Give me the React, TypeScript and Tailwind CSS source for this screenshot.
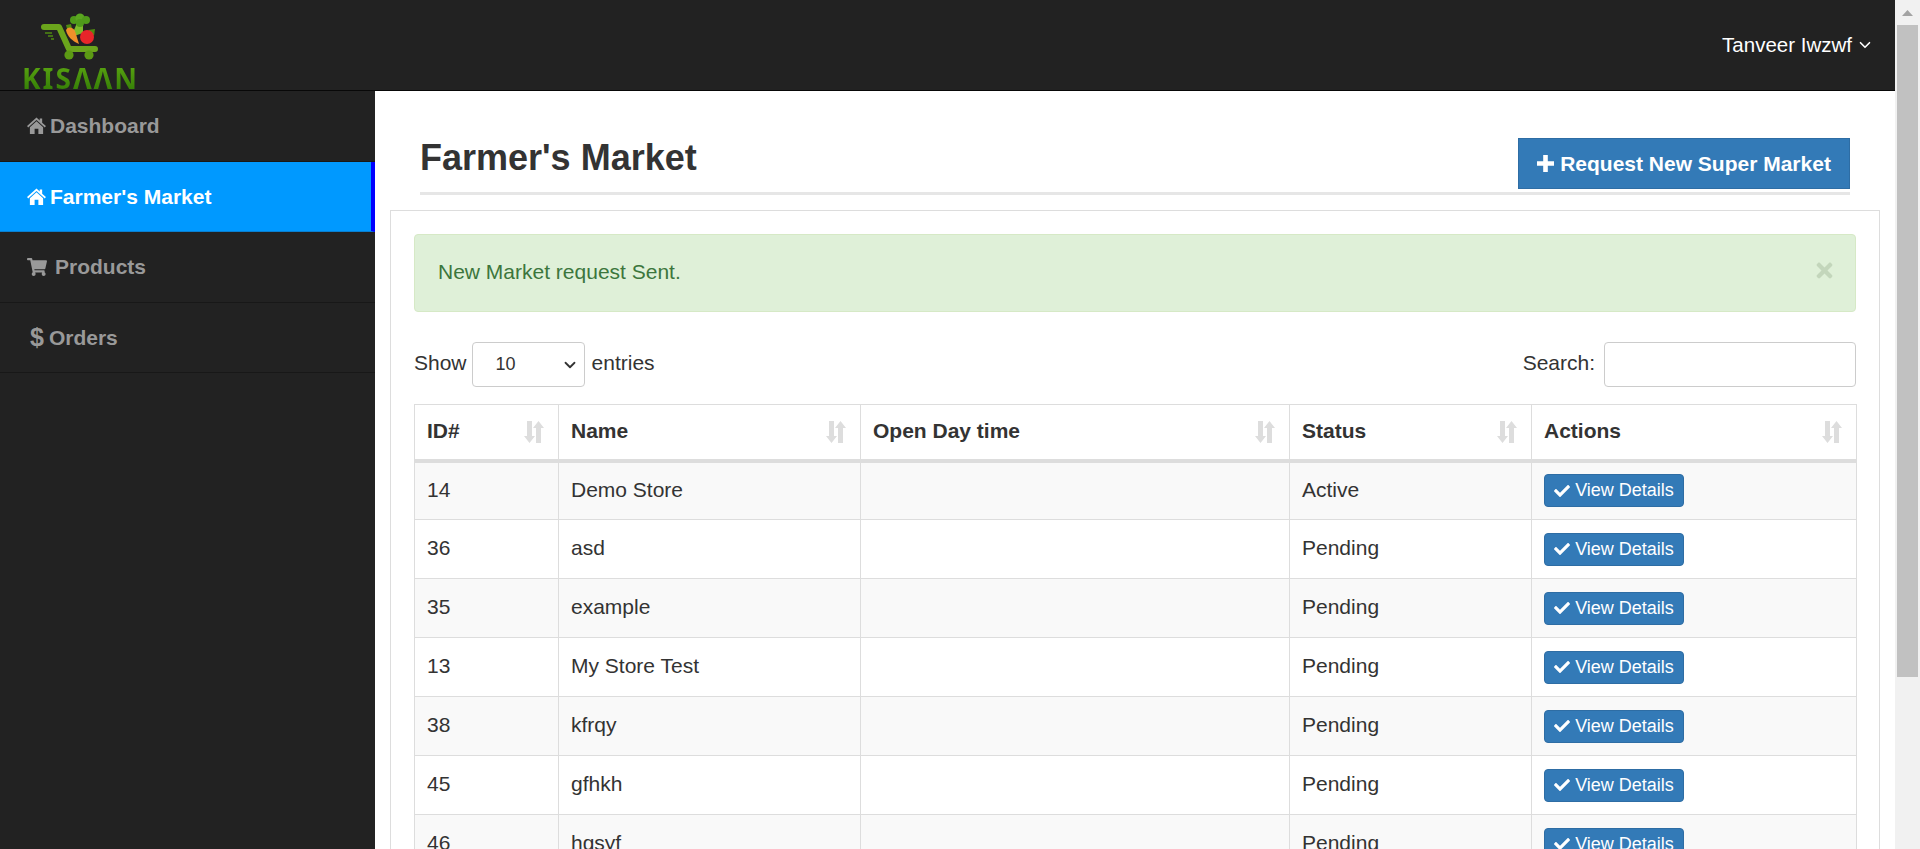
import { ChevronDown } from "lucide-react";
import { FaCheck, FaShoppingCart, FaTimes } from "react-icons/fa";

const rows = [
  { id: 14, name: "Demo Store", status: "Active" },
  { id: 36, name: "asd", status: "Pending" },
  { id: 35, name: "example", status: "Pending" },
  { id: 13, name: "My Store Test", status: "Pending" },
  { id: 38, name: "kfrqy", status: "Pending" },
  { id: 45, name: "gfhkh", status: "Pending" },
  { id: 46, name: "hgsyf", status: "Pending" },
];

const columns = [
  { label: "ID#", width: "w-[144px]" },
  { label: "Name", width: "w-[302px]" },
  { label: "Open Day time", width: "w-[429px]" },
  { label: "Status", width: "w-[242px]" },
  { label: "Actions", width: "w-[325px]" },
];

function HomeIcon() {
  return (
    <svg viewBox="0 0 20 18" className="h-[17px] w-[19px] fill-current">
      <path d="M10 0.5 L13.4 3.6 V1.6 H16 V6 L20 9.6 L18.8 11 L10 3.2 L1.2 11 L0 9.6 Z" />
      <path d="M10 4.6 L17 10.8 V18 H12 V12.5 H8 V18 H3 V10.8 Z" />
    </svg>
  );
}

function PlusIcon() {
  return (
    <svg viewBox="0 0 17 17" className="mr-[6px] h-[17px] w-[17px] fill-current">
      <path d="M6.2 0 H10.8 V6.2 H17 V10.8 H10.8 V17 H6.2 V10.8 H0 V6.2 H6.2 Z" />
    </svg>
  );
}

function SortIcon() {
  return (
    <svg viewBox="0 0 20 22" className="h-[22px] w-[20px] fill-[#dddddd]">
      <path d="M3 0 H8 V15 H11 L5.5 22 L0 15 H3 Z" />
      <path d="M12 7 H17 V22 H12 Z M14.5 0 L20 7 H9 Z" />
    </svg>
  );
}

function Logo() {
  return (
    <div className="relative h-[90px] w-[160px]">
      <svg viewBox="0 0 160 66" className="absolute left-0 top-0 h-[66px] w-[160px]">
        <path d="M44 27 H59 L69 49 H95" fill="none" stroke="#6ba51c" strokeWidth="6" strokeLinecap="round" strokeLinejoin="round" />
        <path d="M45 33 H52 M48 36 H53 M51 39 H54" stroke="#4f8a10" strokeWidth="1.3" />
        <circle cx="69" cy="55" r="4.6" fill="#5c9a14" />
        <circle cx="89" cy="55" r="4.6" fill="#5c9a14" />
        <path d="M71 37 L77 23 H83 L83 33 Z" fill="#7dbb2c" />
        <circle cx="74" cy="20" r="4" fill="#4f9a1a" />
        <circle cx="80" cy="18" r="4.6" fill="#5aa620" />
        <circle cx="86" cy="20" r="4" fill="#4f9a1a" />
        <circle cx="80" cy="23" r="4" fill="#4f9a1a" />
        <path d="M66 25 L71 24 L72 29 L67 29 Z" fill="#4f8a10" />
        <path d="M66 30 C68 26 73 27 75 31 L79 44 C72 41 67 36 66 30 Z" fill="#f0902a" />
        <path d="M88 30 L95 29 L94 36 Z" fill="#4f8a10" />
        <circle cx="87" cy="37" r="7" fill="#e8262a" />
      </svg>
      <span className="absolute left-[22px] top-[62px] bg-gradient-to-b from-[#5ea812] to-[#2f7a06] bg-clip-text font-['Noto_Sans',sans-serif] text-[28px] font-bold leading-[32px] tracking-[2px] text-transparent">
        KISΛΛN
      </span>
    </div>
  );
}

function NavItem({ icon, label, active, gap }: { icon: React.ReactNode; label: string; active?: boolean; gap: string }) {
  return (
    <a
      className={
        active
          ? "flex h-[70.5px] items-center border-b border-r-4 border-b-[#0a7fd0] border-r-[#0000ff] bg-[#0099ff] pl-[27px] text-[21px] font-bold text-white"
          : "flex h-[70.5px] items-center border-b border-b-[#181818] pl-[27px] text-[21px] font-bold text-[#999999]"
      }
    >
      <span className={`flex ${gap}`}>{icon}</span>
      {label}
    </a>
  );
}

function Scrollbar() {
  return (
    <div className="flex w-[25px] flex-col items-center bg-[#f1f1f1]">
      <svg viewBox="0 0 11 6" className="mt-[10px] h-[6px] w-[11px] fill-[#a3a3a3]">
        <path d="M5.5 0 L11 6 H0 Z" />
      </svg>
      <div className="mt-[9px] h-[652px] w-[21px] bg-[#c1c1c1]" />
    </div>
  );
}

export default function App() {
  return (
    <div className="flex h-[849px] overflow-hidden bg-white font-['Liberation_Sans',Arial,sans-serif] text-[#333333]">
      <div className="flex min-w-0 flex-1 flex-col">
        <header className="flex h-[91px] shrink-0 items-center justify-between border-b border-b-[#080808] bg-[#222222]">
          <Logo />
          <div className="mr-[21px] flex items-center gap-[4px] text-[20.5px] text-white">
            Tanveer Iwzwf
            <ChevronDown size={18} strokeWidth={2.2} />
          </div>
        </header>
        <div className="flex min-h-0 flex-1">
          <aside className="w-[375px] shrink-0 bg-[#222222]">
            <NavItem icon={<HomeIcon />} label="Dashboard" gap="mr-[4px]" />
            <NavItem icon={<HomeIcon />} label="Farmer's Market" gap="mr-[4px]" active />
            <NavItem icon={<FaShoppingCart size={20} />} label="Products" gap="mr-[8px]" />
            <NavItem icon={<span className="text-[25px] font-bold leading-none">$</span>} label="Orders" gap="ml-[3px] mr-[5px]" />
          </aside>
          <main className="min-w-0 flex-1 overflow-hidden">
            <div className="mx-[45px] mt-[47px] flex items-start justify-between border-b-[3px] border-b-[#e6e6e6] pb-[3px]">
              <h1 className="mt-[-5px] text-[36px] font-bold leading-[50px] text-[#333333]">Farmer's Market</h1>
              <button className="flex h-[51px] w-[332px] items-center justify-center border border-[#2e6da4] bg-[#337ab7] text-[21px] font-bold text-white">
                <PlusIcon />
                Request New Super Market
              </button>
            </div>
            <section className="mx-[15px] mt-[15px] border border-[#dddddd] px-[23px] pt-[23px]">
              <div className="flex h-[78px] items-center justify-between rounded-[4px] border border-[#d6e9c6] bg-[#dff0d8] pl-[23px] pr-[19px] text-[21px] text-[#3c763d]">
                <span className="mb-[2px]">New Market request Sent.</span>
                <FaTimes size={23} className="mb-[6px] text-[#c3d6bb]" />
              </div>
              <div className="mt-[30px] flex h-[45px] items-center justify-between text-[21px]">
                <label className="flex items-center">
                  <span className="mb-[4px]">Show</span>
                  <span className="relative ml-[5px] mr-[7px] flex">
                    <select className="h-[45px] w-[113px] appearance-none rounded-[4px] border border-[#cccccc] bg-white pl-[23px] text-[18px]">
                      <option>10</option>
                    </select>
                    <ChevronDown size={18} strokeWidth={2.4} className="absolute right-[6px] top-[14px]" />
                  </span>
                  <span className="mb-[4px]">entries</span>
                </label>
                <label className="flex items-center">
                  <span className="mb-[4px]">Search:</span>
                  <input className="ml-[9px] h-[45px] w-[252px] rounded-[4px] border border-[#cccccc] bg-white" />
                </label>
              </div>
              <table className="mt-[17px] w-[1442px] table-fixed border-collapse text-[21px]">
                <thead>
                  <tr className="h-[56px]">
                    {columns.map((c) => (
                      <th key={c.label} className={`${c.width} border border-b-[4px] border-[#dddddd] pl-[12px] pr-[14px] text-left font-bold`}>
                        <div className="flex items-center justify-between">
                          <span className="mb-[2px]">{c.label}</span>
                          <SortIcon />
                        </div>
                      </th>
                    ))}
                  </tr>
                </thead>
                <tbody>
                  {rows.map((r, i) => (
                    <tr key={r.id} className={i % 2 === 0 ? "h-[59px] bg-[#f9f9f9]" : "h-[59px] bg-white"}>
                      <td className="border border-[#dddddd] px-[12px] pb-[3px]">{r.id}</td>
                      <td className="border border-[#dddddd] px-[12px] pb-[3px]">{r.name}</td>
                      <td className="border border-[#dddddd] px-[12px] pb-[3px]"></td>
                      <td className="border border-[#dddddd] px-[12px] pb-[3px]">{r.status}</td>
                      <td className="border border-[#dddddd] px-[12px]">
                        <button className="flex h-[33px] w-[140px] items-center justify-center rounded-[4px] border border-[#2e6da4] bg-[#337ab7] text-[18px] text-white">
                          <FaCheck size={16} className="mr-[5px]" />
                          View Details
                        </button>
                      </td>
                    </tr>
                  ))}
                </tbody>
              </table>
            </section>
          </main>
        </div>
      </div>
      <Scrollbar />
    </div>
  );
}
